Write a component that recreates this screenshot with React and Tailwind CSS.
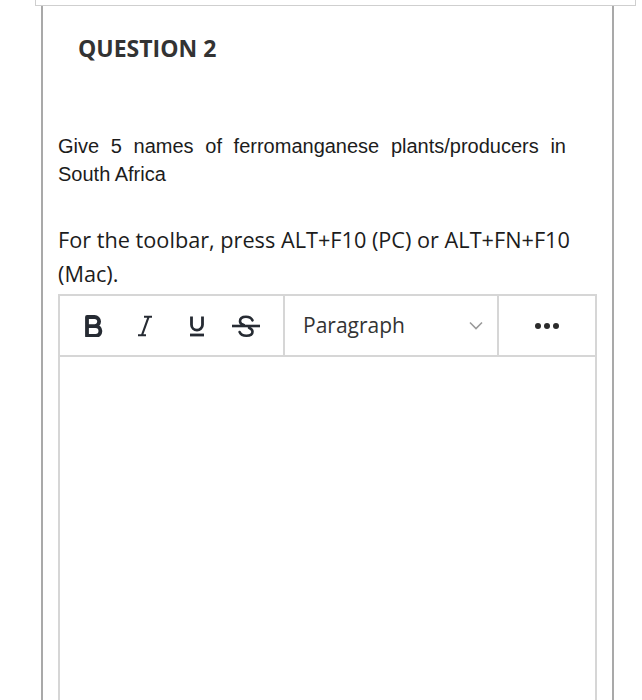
import React from "react";

function BoldIcon() {
  return (
    <svg width="20" height="22" viewBox="0 0 20 22" fill="none">
      <path d="M3 2h7.5a4.6 4.6 0 0 1 0 9.2H3zM3 11.2h8.5a4.9 4.9 0 0 1 0 9.8H3z" stroke="#262b33" strokeWidth="3.8" strokeLinejoin="round" />
    </svg>
  );
}

function ItalicIcon() {
  return (
    <svg width="16" height="22" viewBox="0 0 16 22" fill="none">
      <path d="M7 1.8h8M1 20.2h8M11.6 1.8L5 20.2" stroke="#262b33" strokeWidth="2.1" />
    </svg>
  );
}

function UnderlineIcon() {
  return (
    <svg width="18" height="22" viewBox="0 0 18 22" fill="none">
      <path d="M3.5 1.5v8.2a5.5 5.5 0 0 0 11 0V1.5" stroke="#262b33" strokeWidth="2.8" />
      <path d="M2 20h14" stroke="#262b33" strokeWidth="2.8" />
    </svg>
  );
}

function StrikeIcon() {
  return (
    <svg width="30" height="22" viewBox="0 0 30 22" fill="none">
      <path d="M21.5 5.4C20.4 3 18.2 1.8 15 1.8c-3.8 0-6 1.9-6 4.4 0 2.1 1.4 3.2 3.8 3.9" stroke="#262b33" strokeWidth="2.6" strokeLinecap="round" />
      <path d="M18 12.8c2 0.8 3.5 2 3.5 3.9 0 2.6-2.4 4-6.1 4-3.5 0-5.8-1.3-6.8-3.7" stroke="#262b33" strokeWidth="2.6" strokeLinecap="round" />
      <path d="M1 11h28" stroke="#262b33" strokeWidth="2.6" />
    </svg>
  );
}

export default function App() {
  return (
    <div className="w-[642px] h-[700px] overflow-hidden bg-white flex flex-col">
      <div className="ml-[35px] w-[601px] h-[6px] shrink-0 border-x border-b border-[#cfcfcf]" />
      <div className="ml-[41px] w-[573px] flex-1 border-x-2 border-[#a9a9a9] pl-[15px] pr-[15px] pt-[27px]">
        <h2
          className="ml-[20px] text-[23px] leading-[31px] font-bold text-[#333333]"
          style={{ fontFamily: '"Open Sans", sans-serif' }}
        >
          QUESTION 2
        </h2>
        <p
          className="mt-[68px] w-[508px] text-[20px] leading-[28px] text-[#1c1c1c] text-justify"
          style={{ fontFamily: '"Liberation Sans", Arial, sans-serif', textAlignLast: "left" }}
        >
          Give 5 names of ferromanganese plants/producers in South Africa
        </p>
        <p
          className="mt-[35px] text-[21.7px] leading-[34px] text-[#1c1c1c]"
          style={{ fontFamily: '"Open Sans", sans-serif' }}
        >
          For the toolbar, press ALT+F10 (PC) or ALT+FN+F10 (Mac).
        </p>
        <div className="mt-[3px] w-[539px] border-2 border-[#d6d6d6] flex flex-col h-[420px]">
          <div className="h-[61px] flex items-stretch border-b-2 border-[#d6d6d6] shrink-0">
            <div className="w-[225px] flex items-center pl-[24px] border-r-2 border-[#d6d6d6]">
              <span className="w-[20px] flex justify-center"><BoldIcon /></span>
              <span className="ml-[33px] w-[16px] flex justify-center"><ItalicIcon /></span>
              <span className="ml-[35px] w-[18px] flex justify-center"><UnderlineIcon /></span>
              <span className="ml-[25px] w-[30px] flex justify-center"><StrikeIcon /></span>
            </div>
            <div className="w-[214px] flex items-center pl-[18px] pr-[14px] border-r-2 border-[#d6d6d6]">
              <span
                className="flex-1 text-[21px] text-[#333333]"
                style={{ fontFamily: '"Open Sans", sans-serif' }}
              >
                Paragraph
              </span>
              <svg width="14" height="9" viewBox="0 0 14 9" fill="none">
                <path d="M1 1.5l6 6 6-6" stroke="#9a9a9a" strokeWidth="1.6" />
              </svg>
            </div>
            <div className="flex-1 flex items-center justify-center gap-[3px]">
              <span className="w-[6px] h-[6px] rounded-full bg-[#2b2b2b]" />
              <span className="w-[6px] h-[6px] rounded-full bg-[#2b2b2b]" />
              <span className="w-[6px] h-[6px] rounded-full bg-[#2b2b2b]" />
            </div>
          </div>
          <div className="flex-1" />
        </div>
      </div>
    </div>
  );
}
